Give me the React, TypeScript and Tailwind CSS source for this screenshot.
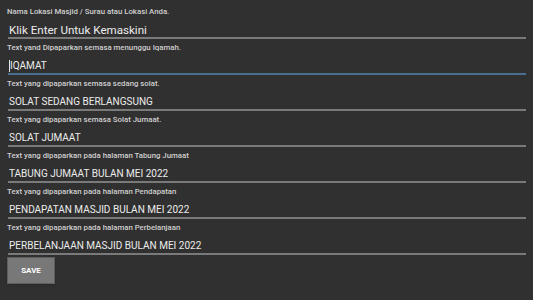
const FIELDS = [
  {
    label: "Nama Lokasi Masjid / Surau atau Lokasi Anda.",
    value: "Klik Enter Untuk Kemaskini",
    focus: false,
  },
  {
    label: "Text yand Dipaparkan semasa menunggu Iqamah.",
    value: "IQAMAT",
    focus: true,
  },
  {
    label: "Text yang dipaparkan semasa sedang solat.",
    value: "SOLAT SEDANG BERLANGSUNG",
    focus: false,
  },
  {
    label: "Text yang dipaparkan semasa Solat Jumaat.",
    value: "SOLAT JUMAAT",
    focus: false,
  },
  {
    label: "Text yang dipaparkan pada halaman Tabung Jumaat",
    value: "TABUNG JUMAAT BULAN MEI 2022",
    focus: false,
  },
  {
    label: "Text yang dipaparkan pada halaman Pendapatan",
    value: "PENDAPATAN MASJID BULAN MEI 2022",
    focus: false,
  },
  {
    label: "Text yang dipaparkan pada halaman Perbelanjaan",
    value: "PERBELANJAAN MASJID BULAN MEI 2022",
    focus: false,
  },
];

type FieldProps = { label: string; value: string; focus: boolean };

function Field(props: FieldProps) {
  // the upper-case values render narrower than the mixed-case hint
  const upper = props.value === props.value.toUpperCase();
  return (
    <div className="flex flex-col mb-[4px]">
      <p className="text-[7.8px] leading-[10px] font-medium text-[#cfcfcf]">{props.label}</p>
      <div
        className={`${props.focus ? "border-[#4b6f8e]" : "border-[#7a7a7a]"
          } ml-px border-b-2 pt-[6px] flex items-center`}
      >
        {props.focus && <span className="w-px h-[12px] bg-[#e6e6e6] ml-px" />}
        <span
          className={`${props.focus ? "pl-0" : "pl-[1px]"} ${upper ? "text-[10px]" : "text-[11.6px]"
            } leading-[14px] text-[#ececec]`}
        >
          {props.value}
        </span>
      </div>
    </div>
  );
}

export default function App() {
  return (
    <div
      className="w-[533px] h-[300px] bg-[#303030] px-[7px] pt-[7px] overflow-hidden"
      style={{ fontFamily: "Roboto, 'Liberation Sans', sans-serif" }}
    >
      {FIELDS.map((f, i) => (
        <Field {...f} key={i} />
      ))}
      <button className="block mt-[-2px] w-[48px] h-[27px] bg-[#787878] border border-[#5e5e5e] shadow-sm text-[8px] font-bold text-white">
        SAVE
      </button>
    </div>
  );
}
